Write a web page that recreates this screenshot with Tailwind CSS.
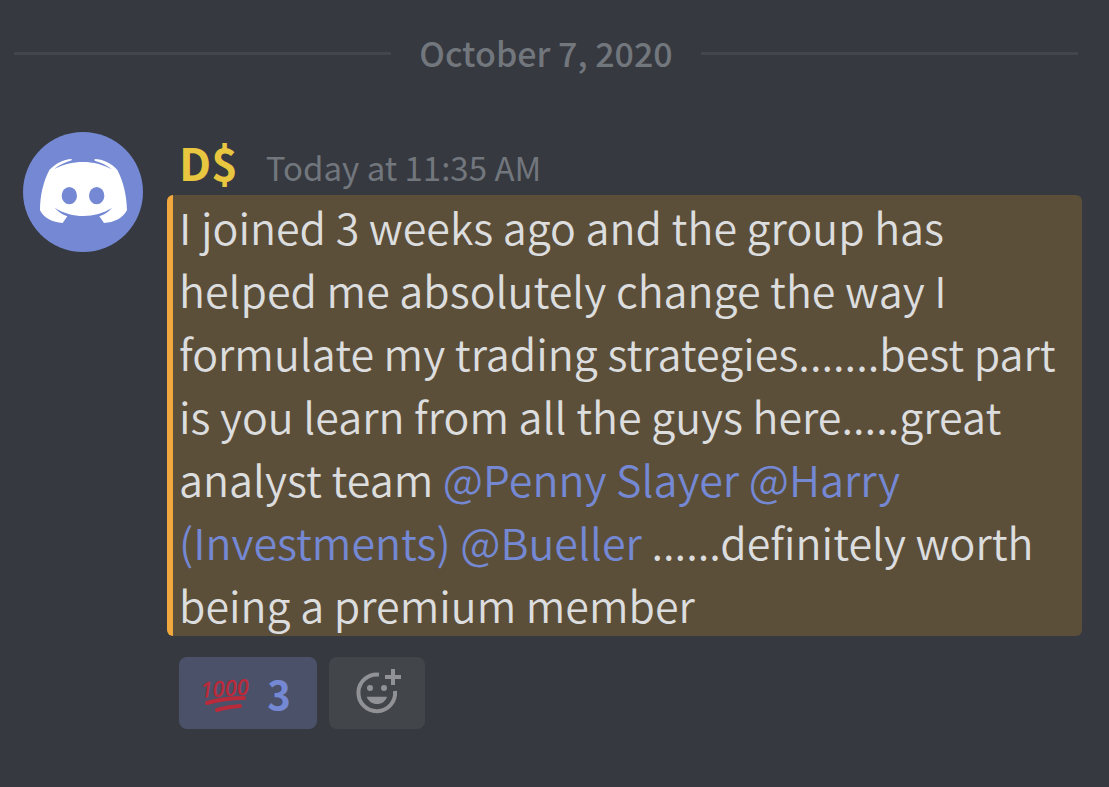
<!DOCTYPE html>
<html lang="en">
<head>
<meta charset="utf-8"/>
<meta content="width=device-width, initial-scale=1.0" name="viewport"/>
<title>Discord</title>
<script src="https://cdn.jsdelivr.net/npm/@tailwindcss/browser@4"></script>
</head>
<body class="bg-[#36393f] min-h-screen font-['Noto_Sans_CJK_SC','Open_Sans',sans-serif] text-[#dcddde]">
<main class="pt-7 pl-[14px] pr-[27px]">
  <!-- date divider -->
  <div class="flex items-center gap-7 mr-1">
    <span class="flex-1 h-[3px] bg-[#43464c]"></span>
    <h2 class="text-[34px] leading-[50px] font-medium text-[#72767d]">October 7, 2020</h2>
    <span class="flex-1 h-[3px] bg-[#43464c]"></span>
  </div>

  <!-- message -->
  <article class="flex items-start gap-6 mt-[54px] pl-[9px]">
    <svg class="w-[120px] h-[120px] shrink-0" viewBox="69 66 360 360" role="img" aria-label="Discord avatar">
      <circle cx="249" cy="246" r="180" fill="#7488d3"/>
      <path fill="#fff" d="M148 180C166 161 190 148 215 147L215 151C194 157 177 166 163 177C216 148 284 149 336 178C320 165 302 157 284 152L284 147C308 148 334 159 352 180C370 214 380 256 381 301C368 325 342 338 312 339L298 319C315 313 327 305 336 294C284 326 216 326 164 293C173 304 186 313 202 319L188 339C157 337 132 325 120 301C120 256 130 215 148 180Z"/>
      <ellipse cx="208" cy="257" rx="23" ry="26" fill="#7488d3"/>
      <ellipse cx="290" cy="257" rx="23" ry="26" fill="#7488d3"/>
    </svg>

    <div class="flex-1 min-w-0">
      <header class="flex items-baseline gap-7 pl-3 h-[63px] leading-[60px]">
        <h3 class="text-[45px] font-bold text-[#e9c640]">D$</h3>
        <time class="text-[33px] text-[#72767d]">Today at 11:35 AM</time>
      </header>
      <p class="bg-[#5c4f3a] border-l-6 border-[#f0a83f] rounded-md pl-[6px] pr-2 text-[43px] leading-[63px] font-[350]">I joined 3 weeks ago and the group has helped me absolutely change the way I formulate my trading strategies.......best part is you learn from all the guys here.....great analyst team <a href="#" class="text-[#7488d3]">@Penny Slayer</a> <a href="#" class="text-[#7488d3]">@Harry (Investments)</a> <a href="#" class="text-[#7488d3]">@Bueller</a> ......definitely worth being a premium member</p>

      <div class="flex gap-3 pl-3 mt-[21px]">
        <button class="flex items-center justify-center gap-4 w-[138px] h-[72px] pr-1 rounded-lg bg-[#4a5169] text-[#7488d3] text-[40px] leading-[56px] font-bold">
          <svg class="w-[50px] h-10 overflow-visible" viewBox="0 0 50 40" aria-hidden="true">
            <text x="0" y="25" transform="rotate(-4 0 25)" font-family="Open Sans" font-size="22" font-weight="600" font-style="italic" fill="#b92b3a">1000</text>
            <path d="M6 30Q24 25 43 25M16 37Q26 34 39 33" fill="none" stroke="#b92b3a" stroke-width="4" stroke-linecap="round"/>
          </svg>
          <span>3</span>
        </button>
        <button class="flex items-center justify-center w-24 h-[72px] rounded-lg bg-[#42454a]" aria-label="Add reaction">
          <svg class="w-12 h-12" viewBox="579 87 144 144">
            <path d="M657 104A55 55 0 1 0 705 153" fill="none" stroke="#919295" stroke-width="12"/>
            <circle cx="630" cy="144" r="9" fill="#919295"/>
            <circle cx="672" cy="144" r="9" fill="#919295"/>
            <path d="M620 170H681C677 184 665 192 651 192C637 192 625 184 620 170Z" fill="#919295"/>
            <path d="M699 87V135M675 111H723" stroke="#919295" stroke-width="12"/>
          </svg>
        </button>
      </div>
    </div>
  </article>
</main>
</body>
</html>
